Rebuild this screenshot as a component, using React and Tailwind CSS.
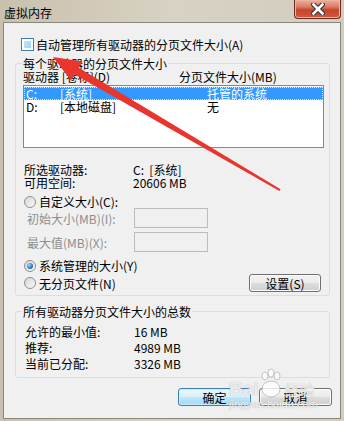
import React from "react";

function Radio({ checked }) {
  return (
    <span className="w-[12px] h-[12px] rounded-full border border-[#8e8f8f] bg-[linear-gradient(135deg,#d6d6d6,#fafafa)] flex items-center justify-center shrink-0">
      {checked ? (
        <span className="w-[6px] h-[6px] rounded-full bg-[radial-gradient(circle_at_35%_35%,#9fdcff,#1b63b5_70%,#0f3f7a)]" />
      ) : null}
    </span>
  );
}

function Btn({ children, def, className }) {
  return (
    <div
      className={
        def
          ? "h-[18px] rounded-[3px] border border-[#3c7fb1] bg-[linear-gradient(#eaf6fd_0%,#d9f0fc_50%,#bee6fd_50%,#a7d9f5_100%)] shadow-[inset_0_0_0_1px_#c6ecff] flex items-center justify-center " + className
          : "h-[18px] rounded-[3px] border border-[#707070] bg-[linear-gradient(#f2f2f2_0%,#ebebeb_50%,#dddddd_50%,#cfcfcf_100%)] shadow-[inset_0_0_0_1px_#fcfcfc] flex items-center justify-center " + className
      }
    >
      {children}
    </div>
  );
}

function CloseButton() {
  return (
    <div className="mr-[3px] w-[47px] h-[19px] rounded-b-[4px] border border-t-0 border-[#6a2b22] bg-[linear-gradient(#eab0a2_0%,#d9785f_40%,#c7442c_55%,#d0583f_100%)] shadow-[inset_0_0_0_1px_#f0b3a3] flex items-center justify-center">
      <svg width="14" height="12" viewBox="0 0 14 12">
        <path d="M2.5 1.5 L11.5 10.5 M11.5 1.5 L2.5 10.5" stroke="#3b3b3b" strokeWidth="5" strokeLinecap="square" />
        <path d="M2.5 1.5 L11.5 10.5 M11.5 1.5 L2.5 10.5" stroke="#ffffff" strokeWidth="2.6" strokeLinecap="square" />
      </svg>
    </div>
  );
}

export default function App() {
  return (
    <div className="relative w-[344px] h-[421px] overflow-hidden font-['Noto_Sans_CJK_SC',sans-serif] text-[12px] leading-[13px] text-black bg-[linear-gradient(90deg,#c9c1ae,#d8d2c4_50%,#d3cdbf)] flex flex-col">
      <div className="h-[22px] flex items-start justify-between shrink-0">
        <span className="ml-[4px] mt-[6px] text-[12px] leading-[14px]">虚拟内存</span>
        <CloseButton />
      </div>

      <div className="flex-1 ml-[3px] mr-[3px] mb-[2px] border border-[#8b877b] bg-[#f0f0f0] pl-[11px] pr-[10px] pt-[15px] flex flex-col">
        <div className="flex items-center h-[13px] ml-[6px]">
          <span className="w-[13px] h-[13px] border border-[#3c7fb1] bg-white p-[2px] shrink-0">
            <span className="block w-full h-full bg-[linear-gradient(135deg,#c8e6f8,#9ed2f0)]" />
          </span>
          <span className="ml-[2px]">自动管理所有驱动器的分页文件大小(A)</span>
        </div>

        <fieldset className="mt-[6px] border border-[#d5dfe5] rounded-[3px] px-[6px] pb-[3px]">
          <legend className="px-[1px]">每个驱动器的分页文件大小</legend>
          <div className="pl-[1px] flex flex-col">
            <div className="flex h-[13px]">
              <span className="w-[156px]">驱动器 [卷标](D)</span>
              <span>分页文件大小(MB)</span>
            </div>
            <div className="mt-[2px] h-[63px] border border-[#828790] bg-white pt-[1px] mr-[-1px]">
              <div className="flex h-[13px] bg-[#3399ff] text-white pl-[2px] outline-1 outline-dotted outline-offset-[-1px] outline-[#cfe6ff]">
                <span className="w-[34px]">C:</span>
                <span className="w-[147px]">[系统]</span>
                <span>托管的系统</span>
              </div>
              <div className="flex h-[13px] pl-[2px]">
                <span className="w-[34px]">D:</span>
                <span className="w-[147px]">[本地磁盘]</span>
                <span>无</span>
              </div>
            </div>

            <div className="mt-[15px] flex h-[13px] pl-[1px]">
              <span className="w-[109px]">所选驱动器:</span>
              <span>C:&nbsp;&nbsp;[系统]</span>
            </div>
            <div className="flex h-[13px] pl-[1px]">
              <span className="w-[109px]">可用空间:</span>
              <span>20606 MB</span>
            </div>

            <div className="mt-[6px] flex items-center h-[13px] pl-[1px]">
              <Radio />
              <span className="ml-[3px]">自定义大小(C):</span>
            </div>
            <div className="flex items-center h-[20px] pl-[4px]">
              <span className="w-[107px] text-[#8d8d8d]">初始大小(MB)(I):</span>
              <span className="w-[74px] h-[20px] border border-[#bcbcbc] bg-[#f0f0f0]" />
            </div>
            <div className="mt-[4px] flex items-center h-[20px] pl-[4px]">
              <span className="w-[107px] text-[#8d8d8d]">最大值(MB)(X):</span>
              <span className="w-[74px] h-[20px] border border-[#bcbcbc] bg-[#f0f0f0]" />
            </div>

            <div className="mt-[7px] flex items-center h-[13px] pl-[1px]">
              <Radio checked />
              <span className="ml-[3px]">系统管理的大小(Y)</span>
            </div>
            <div className="mt-[2px] flex items-center justify-between h-[18px] pl-[1px]">
              <div className="flex items-center">
                <Radio />
                <span className="ml-[3px]">无分页文件(N)</span>
              </div>
              <Btn className="w-[72px] mr-[2px]">设置(S)</Btn>
            </div>
          </div>
        </fieldset>

        <fieldset className="mt-[9px] border border-[#d5dfe5] rounded-[3px] px-[6px] pb-[7px]">
          <legend className="px-[1px]">所有驱动器分页文件大小的总数</legend>
          <div className="mt-[7px] pl-[3px] flex flex-col gap-[3px]">
            <div className="flex h-[13px]">
              <span className="w-[109px]">允许的最小值:</span>
              <span>16 MB</span>
            </div>
            <div className="flex h-[13px]">
              <span className="w-[109px]">推荐:</span>
              <span>4989 MB</span>
            </div>
            <div className="flex h-[13px]">
              <span className="w-[109px]">当前已分配:</span>
              <span>3326 MB</span>
            </div>
          </div>
        </fieldset>

        <div className="mt-[10px] flex justify-end gap-[8px] mr-[-2px]">
          <Btn def className="w-[73px]">确定</Btn>
          <Btn className="w-[73px]">取消</Btn>
        </div>
      </div>

      {/* watermark */}
      <div className="absolute left-[229px] top-[364px] pointer-events-none text-white/80 [text-shadow:0_0_1px_#9a9a9a] flex flex-col">
        <div className="flex items-end h-[34px]">
          <span className="text-[19px] leading-[19px] font-bold font-['Liberation_Sans',sans-serif]">Bai</span>
          <svg width="24" height="30" viewBox="0 0 24 30" className="opacity-80">
            <g fill="#ffffff" stroke="#a8a8a8" strokeWidth="0.8">
              <ellipse cx="6" cy="8" rx="3" ry="4" />
              <ellipse cx="12" cy="5" rx="3" ry="4" />
              <ellipse cx="18" cy="8" rx="3" ry="4" />
              <ellipse cx="12" cy="21" rx="9" ry="8" />
            </g>
          </svg>
          <span className="text-[15px] leading-[17px] ml-[2px]">经验</span>
        </div>
        <span className="text-[11px] leading-[11px] font-['Liberation_Sans',sans-serif] mt-[1px]">jingyan.baidu.com</span>
      </div>

      {/* red arrow */}
      <svg className="absolute left-0 top-0 pointer-events-none" width="344" height="421" viewBox="0 0 344 421">
        <polygon
          points="53,57 82.7,61.6 78.8,67.8 280.6,189.3 279.4,191 74.8,74.6 71,80.6"
          fill="#e8362f"
        />
      </svg>
    </div>
  );
}
